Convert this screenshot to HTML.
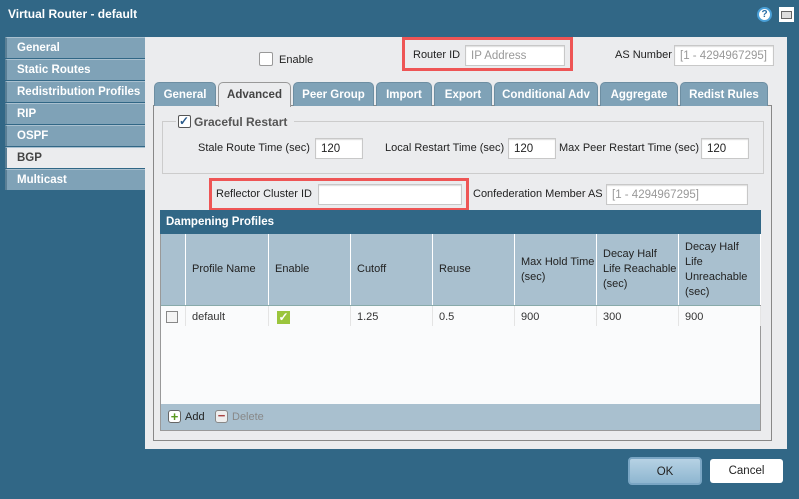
<!DOCTYPE html>
<html><head><style>
*{box-sizing:border-box;margin:0;padding:0}
body{width:799px;height:499px;background:#316786;font-family:"Liberation Sans",sans-serif;font-size:11px;color:#222;position:relative;overflow:hidden}
.a{position:absolute;white-space:nowrap}
.title{left:8px;top:7px;color:#fff;font-weight:bold;font-size:12px}
.nav{left:5px;width:140px;height:21px;background:#7fa2b7;color:#fff;font-weight:bold;font-size:11.5px;padding:4px 0 0 10px;border-left:2px solid #5a7f95;border-top:1px solid #a9c0cf}
.content{left:145px;top:37px;width:642px;height:412px;background:#ebecee}
.inp{background:#fff;border:1px solid #c8c8c8;box-shadow:inset 0 1px 1px #ddd;padding:4px 5px;font-size:11.5px}
.ph{color:#999}
.red{border:3px solid #ee5555}
.tab{top:82px;height:24px;background:#7fa2b7;color:#fff;font-weight:bold;font-size:11.5px;text-align:center;padding-top:6px;border:1px solid #6d8ea2;border-bottom:none;border-radius:5px 5px 0 0}
.th{top:234px;height:71px;border-right:1px solid #fff;display:flex;align-items:center;padding-left:6px;font-size:11px;line-height:15px;white-space:normal}
.td{top:306px;height:20px;padding:5px 0 0 6px;border-right:1px solid #e4e4e4;color:#333}
.l{font-size:11px}
</style></head><body>
<div class="a title">Virtual Router - default</div>
<div class="a" style="left:757px;top:7px;width:15px;height:15px;border-radius:50%;background:#fff;border:2px solid #4aa0d8;color:#2a6fa6;font-size:10px;font-weight:bold;text-align:center;line-height:11px">?</div>
<div class="a" style="left:779px;top:7px;width:15px;height:15px;background:#fff;border:2px solid #fff"><div style="margin-top:2px;height:8px;border:1px solid #666;background:#ddd"></div></div>

<div class="a nav" style="top:37px">General</div>
<div class="a nav" style="top:59px">Static Routes</div>
<div class="a nav" style="top:81px">Redistribution Profiles</div>
<div class="a nav" style="top:103px">RIP</div>
<div class="a nav" style="top:125px">OSPF</div>
<div class="a nav" style="top:147px;background:#ebecee;color:#444">BGP</div>
<div class="a nav" style="top:169px">Multicast</div>

<div class="a content"></div>
<div class="a" style="left:259px;top:52px;width:14px;height:14px;background:#fff;border:1px solid #999;border-radius:2px"></div>
<div class="a l" style="left:279px;top:54px">Enable</div>
<div class="a red" style="left:402px;top:37px;width:171px;height:34px"></div>
<div class="a l" style="left:413px;top:49px">Router ID</div>
<div class="a inp ph" style="left:465px;top:45px;width:100px;height:21px">IP Address</div>
<div class="a l" style="left:615px;top:49px">AS Number</div>
<div class="a inp ph" style="left:674px;top:45px;width:100px;height:21px">[1 - 4294967295]</div>

<div class="a" style="left:153px;top:105px;width:619px;height:336px;border:1px solid #888;background:#ebecee"></div>
<div class="a tab" style="left:154px;width:62px">General</div>
<div class="a tab" style="left:218px;width:73px;background:#ebecee;color:#444;height:25px;border-color:#999">Advanced</div>
<div class="a tab" style="left:293px;width:81px">Peer Group</div>
<div class="a tab" style="left:376px;width:56px">Import</div>
<div class="a tab" style="left:434px;width:58px">Export</div>
<div class="a tab" style="left:494px;width:104px">Conditional Adv</div>
<div class="a tab" style="left:600px;width:78px">Aggregate</div>
<div class="a tab" style="left:680px;width:88px">Redist Rules</div>

<div class="a" style="left:162px;top:121px;width:602px;height:53px;border:1px solid #ccc"></div>
<div class="a" style="left:176px;top:114px;width:118px;height:14px;background:#ebecee"></div>
<div class="a" style="left:178px;top:115px;width:13px;height:13px;background:#fff;border:1px solid #555;border-radius:2px;color:#2a5a8a;font-size:12px;line-height:10px;font-weight:bold">✓</div>
<div class="a" style="left:194px;top:115px;font-weight:bold;color:#555;font-size:12px">Graceful Restart</div>
<div class="a l" style="left:198px;top:142px">Stale Route Time (sec)</div>
<div class="a inp" style="left:315px;top:138px;width:48px;height:21px">120</div>
<div class="a l" style="left:385px;top:142px">Local Restart Time (sec)</div>
<div class="a inp" style="left:508px;top:138px;width:48px;height:21px">120</div>
<div class="a l" style="left:559px;top:142px">Max Peer Restart Time (sec)</div>
<div class="a inp" style="left:701px;top:138px;width:48px;height:21px">120</div>

<div class="a red" style="left:209px;top:178px;width:260px;height:33px"></div>
<div class="a l" style="left:216px;top:188px">Reflector Cluster ID</div>
<div class="a inp" style="left:318px;top:184px;width:144px;height:21px"></div>
<div class="a l" style="left:473px;top:188px">Confederation Member AS</div>
<div class="a inp ph" style="left:606px;top:184px;width:142px;height:21px">[1 - 4294967295]</div>

<div class="a" style="left:160px;top:210px;width:601px;height:221px;border:1px solid #999;background:#fafbfc"></div>
<div class="a" style="left:160px;top:210px;width:601px;height:24px;background:#316786;color:#fff;font-weight:bold;padding:6px 0 0 6px;font-size:11.5px">Dampening Profiles</div>
<div class="a" style="left:161px;top:234px;width:599px;height:72px;background:#a9c0cf;border-bottom:1px solid #8aa"></div>
<div class="a th" style="left:161px;width:25px"></div>
<div class="a th" style="left:186px;width:83px">Profile Name</div>
<div class="a th" style="left:269px;width:82px">Enable</div>
<div class="a th" style="left:351px;width:82px">Cutoff</div>
<div class="a th" style="left:433px;width:82px">Reuse</div>
<div class="a th" style="left:515px;width:82px">Max Hold Time<br>(sec)</div>
<div class="a th" style="left:597px;width:82px">Decay Half<br>Life Reachable<br>(sec)</div>
<div class="a th" style="left:679px;width:82px">Decay Half<br>Life<br>Unreachable<br>(sec)</div>
<div class="a td" style="left:161px;width:25px"><div style="width:12px;height:12px;border:1px solid #888;background:#f4f4f4;margin-left:-1px"></div></div>
<div class="a td" style="left:186px;width:83px">default</div>
<div class="a td" style="left:269px;width:82px"><div style="width:13px;height:13px;background:#9bc53d;color:#fff;font-size:12px;line-height:12px;font-weight:bold;text-align:center;margin-left:2px">✓</div></div>
<div class="a td" style="left:351px;width:82px">1.25</div>
<div class="a td" style="left:433px;width:82px">0.5</div>
<div class="a td" style="left:515px;width:82px">900</div>
<div class="a td" style="left:597px;width:82px">300</div>
<div class="a td" style="left:679px;width:82px">900</div>
<div class="a" style="left:161px;top:404px;width:599px;height:26px;background:#a9c0cf"></div>
<div class="a" style="left:168px;top:410px;width:13px;height:13px;border:1px solid #666;border-radius:3px;background:#fff;color:#5a9a20;font-weight:bold;font-size:13px;line-height:11px;text-align:center">+</div>
<div class="a" style="left:185px;top:411px">Add</div>
<div class="a" style="left:215px;top:410px;width:13px;height:13px;border:1px solid #888;border-radius:3px;background:#eee;color:#a44;font-weight:bold;font-size:13px;line-height:10px;text-align:center">−</div>
<div class="a" style="left:232px;top:411px;color:#888">Delete</div>

<div class="a" style="left:628px;top:457px;width:74px;height:28px;border-radius:4px;background:linear-gradient(#b6d2e4,#8eb6d0);border:2px solid #7aa6c4;text-align:center;padding-top:7px;font-size:11.5px">OK</div>
<div class="a" style="left:710px;top:459px;width:73px;height:24px;border-radius:3px;background:#fff;text-align:center;padding-top:6px;font-size:11.5px">Cancel</div>
</body></html>
